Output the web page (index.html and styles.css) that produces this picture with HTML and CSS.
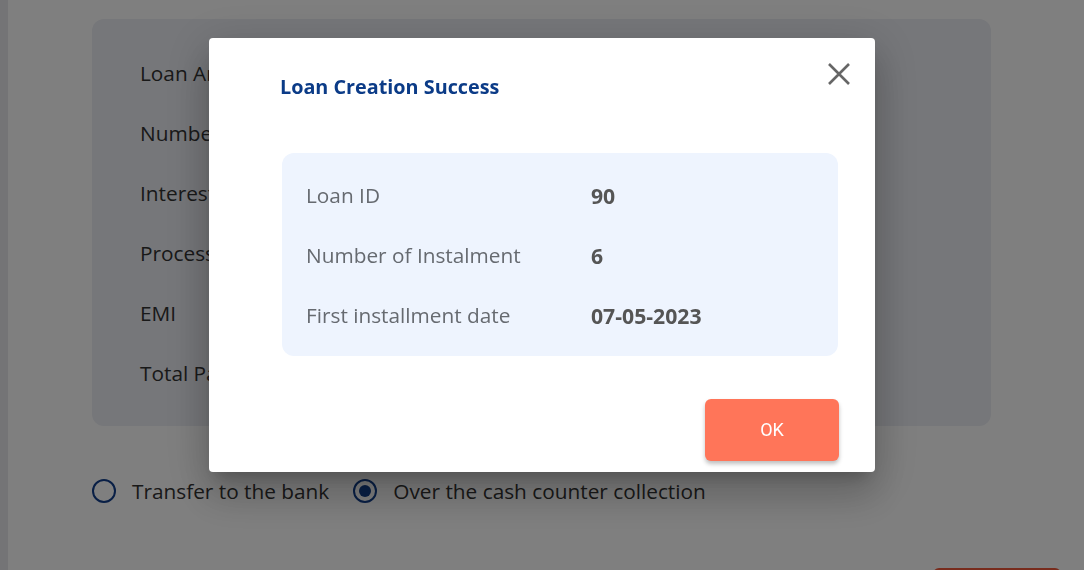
FILE: index.html
```html
<!DOCTYPE html>
<html lang="en">
<head>
<meta charset="utf-8">
<title>Loan Creation Success</title>
<link rel="stylesheet" href="styles.css">
</head>
<body>
<div class="page">
  <aside class="sidebar"></aside>
  <main class="main">
    <section class="summary-card">
      <div class="summary-row">Loan Amount</div>
      <div class="summary-row">Number of Instalment</div>
      <div class="summary-row">Interest Rate</div>
      <div class="summary-row">Processing Fee</div>
      <div class="summary-row">EMI</div>
      <div class="summary-row">Total Payable</div>
    </section>
    <div class="radio-group">
      <label class="radio"><span class="radio-dot"></span>Transfer to the bank</label>
      <label class="radio"><span class="radio-dot checked"></span>Over the cash counter collection</label>
    </div>
    <div class="actions">
      <button class="outline-btn" aria-label="Submit"></button>
    </div>
  </main>
</div>

<div class="overlay">
  <div class="dialog">
    <button class="close-btn" aria-label="Close">
      <svg width="24" height="24" viewBox="0 0 24 24"><path d="M2 2 L22 22 M22 2 L2 22" stroke="#666" stroke-width="2.6" fill="none"/></svg>
    </button>
    <h2 class="dialog-title">Loan Creation Success</h2>
    <div class="info-box">
      <div class="info-row"><span class="info-label">Loan ID</span><span class="info-value">90</span></div>
      <div class="info-row"><span class="info-label">Number of Instalment</span><span class="info-value">6</span></div>
      <div class="info-row"><span class="info-label">First installment date</span><span class="info-value">07-05-2023</span></div>
    </div>
    <div class="dialog-footer">
      <button class="ok-btn">OK</button>
    </div>
  </div>
</div>
</body>
</html>
```

FILE: styles.css
```css
* { box-sizing: border-box; }
html, body { margin: 0; padding: 0; }
body {
  font-family: "Open Sans", "Noto Sans", sans-serif;
  background: #ffffff;
  width: 1084px;
  height: 570px;
  overflow: hidden;
}
.page {
  display: flex;
  height: 570px;
}
.sidebar {
  width: 8px;
  background: #e8e8ec;
  flex: none;
}
.main {
  flex: 1;
  padding: 19px 93px 0 84px;
}
.summary-card {
  background: #eceef4;
  border-radius: 12px;
  height: 407px;
  padding: 24px 48px 23px;
}
.summary-row {
  height: 60px;
  line-height: 60px;
  font-size: 20.8px;
  color: #333;
}
.radio-group {
  display: flex;
  align-items: center;
  gap: 24px;
  margin-top: 50px;
  height: 30px;
}
.radio {
  display: flex;
  align-items: center;
  gap: 16px;
  font-size: 20.8px;
  color: #333;
}
.radio-dot {
  width: 24px;
  height: 24px;
  border: 2px solid #123f8c;
  border-radius: 50%;
  display: flex;
  align-items: center;
  justify-content: center;
}
.radio-dot.checked::after {
  content: "";
  width: 12px;
  height: 12px;
  border-radius: 50%;
  background: #123f8c;
}
.actions {
  display: flex;
  justify-content: flex-end;
  margin-top: 62px;
  margin-right: -70px;
}
.outline-btn {
  width: 128px;
  height: 44px;
  border: 2px solid #f0583a;
  border-radius: 6px;
  background: #fff;
}

.overlay {
  position: fixed;
  inset: 0;
  background: rgba(0, 0, 0, 0.5);
  display: flex;
  justify-content: center;
  align-items: flex-start;
  padding-top: 38px;
}
.dialog {
  position: relative;
  width: 666px;
  height: 434px;
  background: #fff;
  border-radius: 4px;
  padding: 36px 37px 11px 73px;
  box-shadow: 0 11px 15px -7px rgba(0,0,0,.2), 0 24px 38px 3px rgba(0,0,0,.14), 0 9px 46px 8px rgba(0,0,0,.12);
}
.close-btn {
  position: absolute;
  top: 24px;
  right: 24px;
  width: 24px;
  height: 24px;
  padding: 0;
  border: 0;
  background: none;
  display: block;
}
.close-btn svg { display: block; }
.dialog-title {
  margin: 0 0 0 -2px;
  font-size: 19.8px;
  line-height: 26px;
  font-weight: 700;
  color: #0b3b87;
}
.info-box {
  margin-top: 53px;
  background: #eef4fe;
  border-radius: 12px;
  height: 203px;
  padding: 12px 24px 11px;
}
.info-row {
  display: flex;
  height: 60px;
  align-items: center;
  font-size: 20.8px;
}
.info-label {
  width: 285px;
  color: #666a70;
}
.info-value {
  color: #555;
  font-weight: 700;
  font-size: 21.2px;
}
.dialog-footer {
  display: flex;
  justify-content: flex-end;
  margin-top: 43px;
  margin-right: -1px;
}
.ok-btn {
  width: 134px;
  height: 62px;
  border: 0;
  border-radius: 6px;
  background: #ff7559;
  color: #fff;
  font-family: "Roboto", sans-serif;
  font-size: 18px;
  padding-bottom: 2px;
  box-shadow: 0 3px 4px rgba(0,0,0,.25);
}
```
